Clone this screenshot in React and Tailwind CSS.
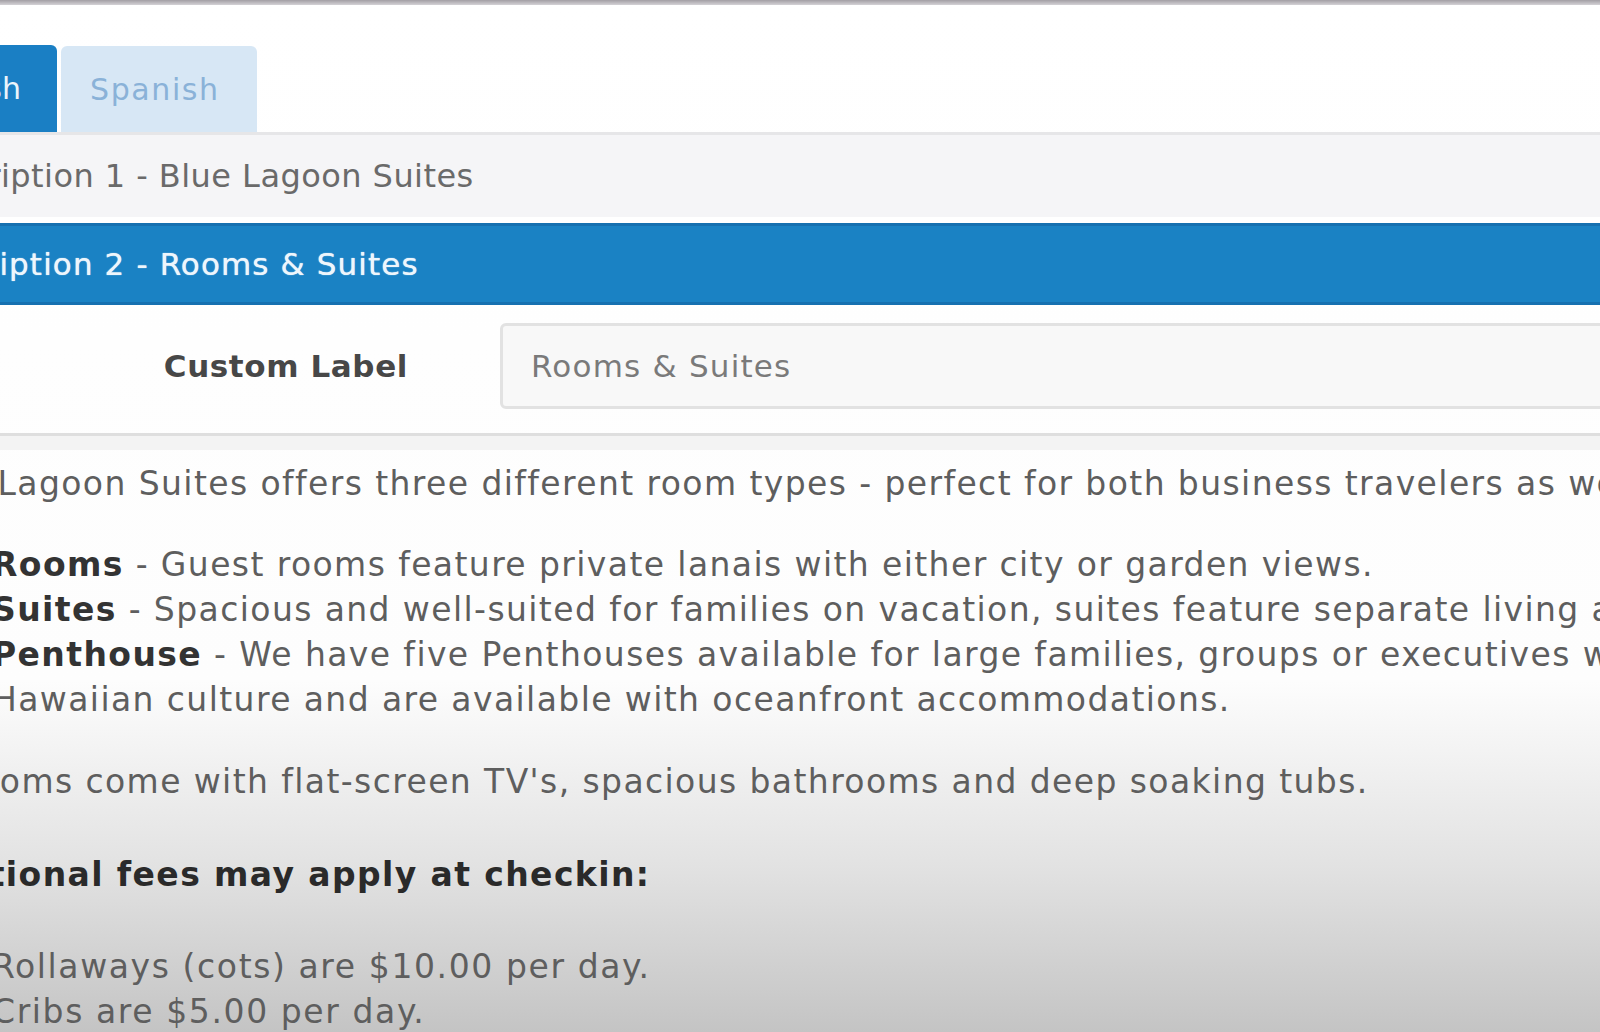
export default function App() {
  return (
    <div className="relative w-[1600px] h-[1032px] overflow-hidden bg-[linear-gradient(to_bottom,#ffffff_0%,#fdfdfd_66%,#e2e2e2_84%,#c4c4c4_100%)] font-['DejaVu_Sans','Verdana',sans-serif]">
      {/* window edge */}
      <div className="h-[5px] bg-[linear-gradient(to_bottom,#a29ea4,#d4d2d6)]" />

      {/* language tabs */}
      <div className="flex items-end h-[130px] pt-[43px] border-b-[3px] border-[#e6e6e8]">
        <div className="-ml-[103px] w-[160px] h-[87px] rounded-t-[6px] bg-[#1a7fc4] flex items-center justify-end pr-[36px] text-[30px] text-[#eaf4fb]">
          English
        </div>
        <div className="ml-[4px] w-[196px] h-[86px] rounded-t-[6px] bg-[#d7e7f5] flex items-center pl-[29px] text-[30px] tracking-[1.6px] text-[#8ab2d8]">
          Spanish
        </div>
      </div>

      {/* description headers */}
      <div className="h-[82px] bg-[#f5f5f7] flex items-center -ml-[93px] text-[32px] tracking-[0.45px] text-[#6a6a6a]">
        Description 1 - Blue Lagoon Suites
      </div>
      <div className="h-[6px] bg-white" />
      <div className="h-[82px] bg-[#1a82c4] border-y-[3px] border-[#1670b0] flex items-center -ml-[95px] text-[31px] tracking-[1.1px] text-[#eef6fc] [text-shadow:0_0_1px_#eef6fc]">
        Description 2 - Rooms &amp; Suites
      </div>

      {/* custom label field */}
      <div className="flex items-center h-[128px] pb-[6px]">
        <div className="w-[490px] flex justify-end pr-[82px] text-[31px] font-bold tracking-[0.6px] text-[#474747]">
          Custom Label
        </div>
        <div className="ml-[10px] flex-1 -mr-[40px] h-[86px] rounded-[6px] border-[3px] border-[#e2e2e2] bg-[#f8f8f8] flex items-center pl-[28px] text-[31px] tracking-[1.2px] text-[#7a7a7a]">
          Rooms &amp; Suites
        </div>
      </div>

      {/* editor body */}
      <div className="border-t-[3px] border-[#dedede]">
        <div className="h-[14px] bg-[#f3f3f3]" />
        <div className="-ml-[93px] pt-[11px] text-[33px] tracking-[1.4px] leading-[45px] text-[#5e5e5e] whitespace-nowrap">
          <p>Blue Lagoon Suites offers three different room types - perfect for both business travelers as well as families.</p>
          <div className="mt-[36px] pl-[85px]">
            <p><b className="text-[#333]">Rooms</b> - Guest rooms feature private lanais with either city or garden views.</p>
            <p><b className="text-[#333]">Suites</b> - Spacious and well-suited for families on vacation, suites feature separate living areas.</p>
            <p><b className="text-[#333]">Penthouse</b> - We have five Penthouses available for large families, groups or executives who</p>
            <p>Hawaiian culture and are available with oceanfront accommodations.</p>
          </div>
          <p className="mt-[37px]">All rooms come with flat-screen TV's, spacious bathrooms and deep soaking tubs.</p>
          <p className="mt-[48px] -ml-[8px] font-bold text-[#2a2a2a]">Additional fees may apply at checkin:</p>
          <div className="mt-[47px] pl-[85px] tracking-[1.6px]">
            <p>Rollaways (cots) are $10.00 per day.</p>
            <p>Cribs are $5.00 per day.</p>
          </div>
        </div>
      </div>
    </div>
  );
}
